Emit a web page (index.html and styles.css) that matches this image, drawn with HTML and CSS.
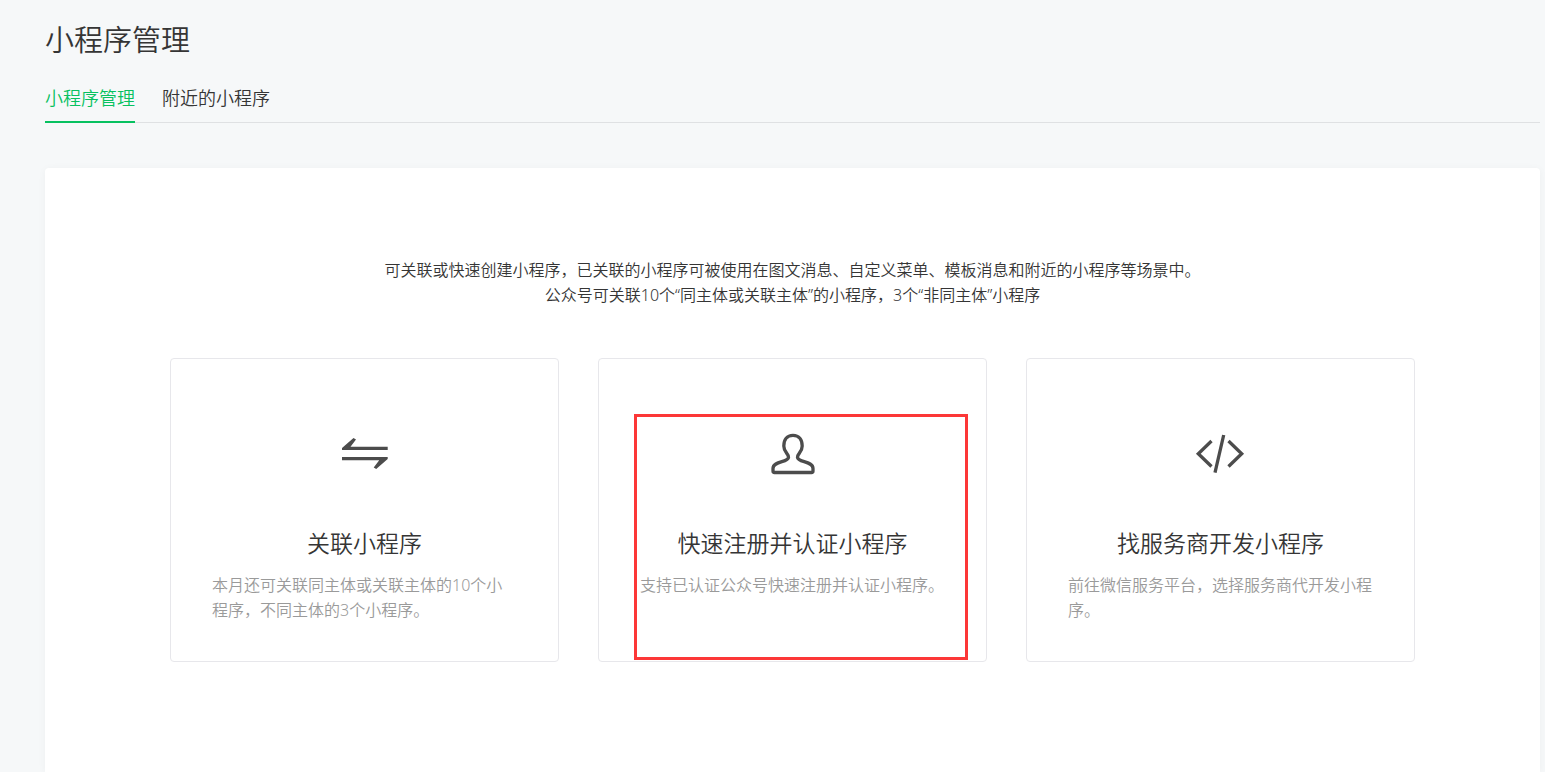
FILE: index.html
```html
<!DOCTYPE html>
<html lang="zh-CN">
<head>
<meta charset="utf-8">
<meta name="viewport" content="width=device-width, initial-scale=1">
<title>小程序管理</title>
<link rel="stylesheet" href="styles.css">
</head>
<body>
<header class="page-header">
  <h1 class="page-title">小程序管理</h1>
  <nav class="tabs">
    <a class="tab tab-active" href="#manage" aria-current="page">小程序管理</a>
    <a class="tab" href="#nearby">附近的小程序</a>
  </nav>
</header>
<main class="panel">
  <p class="intro">可关联或快速创建小程序，已关联的小程序可被使用在图文消息、自定义菜单、模板消息和附近的小程序等场景中。<br>公众号可关联10个“同主体或关联主体”的小程序，3个“非同主体”小程序</p>
  <div class="cards">
    <a class="card" href="#link">
      <svg class="card-icon" width="61" height="60" viewBox="0 0 61 60" aria-hidden="true">
        <path class="fill" d="M8 26V24L19.500 14 22 15.500 16.500 22.700H53.700V26zM53.700 33V35L42.200 45 39.700 43.500 45.200 36.300H8V33z"/>
      </svg>
      <h2 class="card-title">关联小程序</h2>
      <p class="card-desc">本月还可关联同主体或关联主体的10个小程序，不同主体的3个小程序。</p>
    </a>
    <a class="card" href="#register">
      <svg class="card-icon" width="61" height="60" viewBox="0 0 61 60" aria-hidden="true">
        <path class="line" d="M31 11.300C25 11.300 21.800 15.500 21.800 22C21.800 28.500 26.800 29.500 26.500 33.500C26 38.500 11 37 11 44.500V47Q11 48.500 12.500 48.500H49.500Q51 48.500 51 47V44.500C51 37 36 38.500 35.500 33.500C35.200 29.500 40.200 28.500 40.200 22C40.200 15.500 37 11.300 31 11.300Z"/>
      </svg>
      <h2 class="card-title">快速注册并认证小程序</h2>
      <p class="card-desc">支持已认证公众号快速注册并认证小程序。</p>
      <span class="highlight"></span>
    </a>
    <a class="card" href="#provider">
      <svg class="card-icon" width="61" height="60" viewBox="0 0 61 60" aria-hidden="true">
        <path class="line" d="M21.500 17 8.300 29.700 21.500 42.500M38.500 17 51.700 29.700 38.500 42.500M33.700 11 25 48.700"/>
      </svg>
      <h2 class="card-title">找服务商开发小程序</h2>
      <p class="card-desc">前往微信服务平台，选择服务商代开发小程序。</p>
    </a>
  </div>
</main>
</body>
</html>
```
FILE: styles.css
```css
* {
  box-sizing: border-box;
}

body {
  display: flex;
  flex-direction: column;
  min-height: 100vh;
  margin: 0;
  padding: 20px 5px 0 45px;
  background: #f6f8f9;
  color: #353535;
  font-family: "Noto Sans", "Noto Sans CJK SC", sans-serif;
  font-size: 16px;
  font-weight: 350;
  line-height: 25px;
}

h1,
h2,
p {
  margin: 0;
  font-weight: 350;
}

a {
  color: inherit;
  text-decoration: none;
}

.page-title {
  font-size: 29px;
  line-height: 40px;
}

.tabs {
  display: flex;
  gap: 27px;
  margin-top: 16px;
  box-shadow: inset 0 -1px #dfe1e3;
  font-size: 18px;
}

.tab {
  padding: 10px 0;
  border-bottom: 2px solid transparent;
}

.tab-active {
  border-color: #07c160;
  color: #07c160;
}

.panel {
  flex: 1;
  margin-top: 45px;
  padding: 90px 125px 110px;
  border-radius: 4px 4px 0 0;
  background: #fff;
  box-shadow: 0 1px 8px rgba(0, 0, 0, 0.04);
}

.intro {
  text-align: center;
}

.cards {
  display: grid;
  grid-template-columns: repeat(3, 1fr);
  gap: 39px;
  margin-top: 50px;
}

.card {
  position: relative;
  padding: 65px 41px 38px;
  border: 1px solid #e7e7eb;
  border-radius: 4px;
}

.card-icon {
  display: block;
  margin: 0 auto 43px;
}

.card-title {
  font-size: 23px;
  line-height: 32px;
  text-align: center;
}

.card-desc {
  margin-top: 14px;
  color: #9a9a9a;
}

.fill {
  fill: #4c4c4c;
}

.line {
  fill: none;
  stroke: #4c4c4c;
  stroke-width: 3.3;
}

.highlight {
  position: absolute;
  inset: 55px 18px 1px 35px;
  border: 3px solid #fc3737;
}
```
